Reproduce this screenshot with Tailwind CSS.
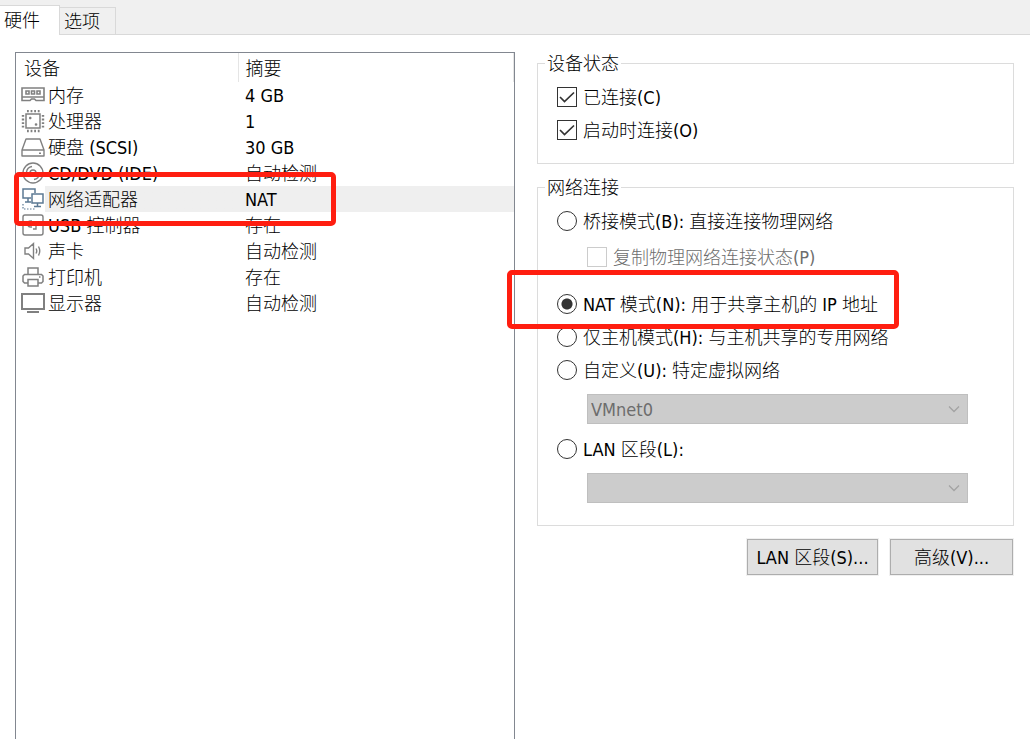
<!DOCTYPE html>
<html lang="zh-CN">
<head>
<meta charset="utf-8">
<meta name="viewport" content="width=device-width, initial-scale=1">
<title>虚拟机设置</title>
<script src="https://cdn.jsdelivr.net/npm/@tailwindcss/browser@4"></script>
</head>
<body class="flex min-h-screen flex-col overflow-x-hidden bg-white font-['DejaVu_Sans_Condensed','Noto_Sans_CJK_SC_Light','Noto_Sans_CJK_SC',sans-serif] text-[18px] leading-6 text-black">
<nav class="flex h-[35px] shrink-0 items-end bg-[#f0f0f0] shadow-[inset_0_-1px_0_#d9d9d9]" role="tablist">
  <button role="tab" aria-selected="true" class="h-[30px] border-t border-r border-[#d9d9d9] bg-white pr-[19px] pl-1 leading-7">硬件</button>
  <button role="tab" aria-selected="false" class="h-7 border border-l-0 border-[#d9d9d9] bg-[#f0f0f0] pt-0.5 pr-[15px] pl-1 leading-6">选项</button>
</nav>
<main class="grid flex-1 grid-cols-[500fr_477fr] gap-x-[22px] pt-[17px] pr-4 pl-[15px]">
  <section class="relative border border-b-0 border-[#828790]">
    <table class="w-full table-fixed border-collapse text-left">
      <colgroup><col class="w-[222px]"><col></colgroup>
      <thead>
        <tr class="h-[29px]">
          <th class="border-r border-[#e5e5e5] p-0 pt-0.5 pl-2 font-normal">设备</th>
          <th class="border-r border-[#e5e5e5] p-0 pt-0.5 pl-[7px] font-normal">摘要</th>
        </tr>
      </thead>
      <tbody>
        <tr class="h-[26px]">
          <td class="p-0 pt-0.5 pl-[5px]"><div class="flex items-center gap-[3px] whitespace-nowrap">
            <svg class="size-6 shrink-0" viewBox="0 0 24 24" fill="none" stroke="#808080" stroke-width="1.600"><path d="M1 4h22v12.500h-8l-1.500-1.500h-3L9 16.500H1zM1 13h22"/><path d="M5 7h3v3H5zM10.500 7h3v3h-3zM16 7h3v3h-3z"/></svg>内存</div></td>
          <td class="p-0 pt-0.5 pl-[7px]">4 GB</td>
        </tr>
        <tr class="h-[26px]">
          <td class="p-0 pt-0.5 pl-[5px]"><div class="flex items-center gap-[3px] whitespace-nowrap">
            <svg class="size-6 shrink-0" viewBox="0 1 24 24" fill="none" stroke="#808080" stroke-width="1.500"><path d="M5 5h14v14H5z"/><path d="M6 2h13M6 22h13M2 6v13M22 6v13" stroke-width="2.400" stroke-dasharray="1.800 1.800"/><path d="M8 9h2.500M9.200 7.800v2.500M13.800 15.500h2.500M15 14.200v2.500" stroke-width="1.500"/></svg>处理器</div></td>
          <td class="p-0 pt-0.5 pl-[7px]">1</td>
        </tr>
        <tr class="h-[26px]">
          <td class="p-0 pt-0.5 pl-[5px]"><div class="flex items-center gap-[3px] whitespace-nowrap">
            <svg class="size-6 shrink-0" viewBox="0 1 24 24" fill="none" stroke="#808080" stroke-width="1.400" stroke-linejoin="round"><path d="M1 15 5 4h14l4 11v6H1zM1 15h22M18 18.300h2"/></svg>硬盘 (SCSI)</div></td>
          <td class="p-0 pt-0.5 pl-[7px]">30 GB</td>
        </tr>
        <tr class="h-[26px]">
          <td class="p-0 pt-0.5 pl-[5px]"><div class="flex items-center gap-[3px] whitespace-nowrap">
            <svg class="size-6 shrink-0" viewBox="0 1 24 24" fill="none" stroke="#808080" stroke-width="1.400"><circle cx="12" cy="12" r="10"/><circle cx="12" cy="12" r="3"/><path d="M5.500 11a6.500 6.500 0 0 1 5.500-5.500M18.500 13a6.500 6.500 0 0 1-5.500 5.500"/></svg>CD/DVD (IDE)</div></td>
          <td class="p-0 pt-0.5 pl-[7px]">自动检测</td>
        </tr>
        <tr class="h-[26px]">
          <td class="bg-linear-to-r from-white from-[29px] to-[#efefef] to-[29px] p-0 pt-0.5 pl-[5px]"><div class="flex items-center gap-[3px] whitespace-nowrap">
            <svg class="size-6 shrink-0" viewBox="0 1 24 24" fill="none" stroke="#5c7a94" stroke-width="1.500"><path d="M10 11H2V2h12v4M7 11v4M4 15h6"/><path d="M11 7h11v9H11zM16.500 16v3M13 19.500h7"/><path d="M2 17v5h13" stroke-width="1.200" stroke-dasharray="1.500 1.500"/></svg>网络适配器</div></td>
          <td class="bg-[#efefef] p-0 pt-0.5 pl-[7px]">NAT</td>
        </tr>
        <tr class="h-[26px]">
          <td class="p-0 pt-0.5 pl-[5px]"><div class="flex items-center gap-[3px] whitespace-nowrap">
            <svg class="size-6 shrink-0" viewBox="0 1 24 24" fill="none" stroke="#808080" stroke-width="1.400"><rect x="2" y="2" width="20" height="20" rx="2"/><path d="M11 8H9.500a2.500 2.500 0 0 0-2.500 2.500v1a2.500 2.500 0 0 0 2.500 2.500H11M13 11h2v5h-3"/></svg>USB 控制器</div></td>
          <td class="p-0 pt-0.5 pl-[7px]">存在</td>
        </tr>
        <tr class="h-[26px]">
          <td class="p-0 pt-0.5 pl-[5px]"><div class="flex items-center gap-[3px] whitespace-nowrap">
            <svg class="size-6 shrink-0" viewBox="0 1 24 24" fill="none" stroke="#808080" stroke-width="1.400"><path d="M4 9h3.500l5-4.500v15l-5-4.500H4zM15 9.500q1.500 2.500 0 5M17.500 7.500q2.500 4.500 0 9"/></svg>声卡</div></td>
          <td class="p-0 pt-0.5 pl-[7px]">自动检测</td>
        </tr>
        <tr class="h-[26px]">
          <td class="p-0 pt-0.5 pl-[5px]"><div class="flex items-center gap-[3px] whitespace-nowrap">
            <svg class="size-6 shrink-0" viewBox="0 1 24 24" fill="none" stroke="#808080" stroke-width="1.500"><path d="M7 9.500V3h10v6.500M7 18H3.500L2 16.500V11l1.500-1.500h17L22 11v5.500L20.500 18H17M7 14.500h10V21H7zM18 12h1.500"/></svg>打印机</div></td>
          <td class="p-0 pt-0.5 pl-[7px]">存在</td>
        </tr>
        <tr class="h-[26px]">
          <td class="p-0 pt-0.5 pl-[5px]"><div class="flex items-center gap-[3px] whitespace-nowrap">
            <svg class="size-6 shrink-0" viewBox="0 1 24 24" fill="none" stroke="#808080" stroke-width="2"><path d="M1 3h22v15H1zM6 21h12"/></svg>显示器</div></td>
          <td class="p-0 pt-0.5 pl-[7px]">自动检测</td>
        </tr>
      </tbody>
    </table>
    <div class="pointer-events-none absolute top-[119px] -left-0.5 h-[54px] w-[322px] rounded-[5px] border-5 border-[#ff1e10]"></div>
  </section>

  <section class="flex flex-col whitespace-nowrap">
    <fieldset class="border border-[#dcdcdc] pr-4 pb-5 pl-[19px]">
      <legend class="-ml-3 px-0.5 pt-0.5 leading-5">设备状态</legend>
      <div class="flex flex-col gap-[7px] pt-2.5">
        <label class="flex items-center gap-1.5"><span class="grid"><input type="checkbox" checked class="peer col-start-1 row-start-1 size-5 appearance-none border border-[#333] bg-white"><svg class="pointer-events-none invisible col-start-1 row-start-1 size-5 peer-checked:visible" viewBox="0 0 20 20" fill="none" stroke="#333" stroke-width="1.700"><path d="m3 10 4.500 4.500L17 5.500"/></svg></span><span class="pt-0.5">已连接(C)</span></label>
        <label class="flex items-center gap-1.5"><span class="grid"><input type="checkbox" checked class="peer col-start-1 row-start-1 size-5 appearance-none border border-[#333] bg-white"><svg class="pointer-events-none invisible col-start-1 row-start-1 size-5 peer-checked:visible" viewBox="0 0 20 20" fill="none" stroke="#333" stroke-width="1.700"><path d="m3 10 4.500 4.500L17 5.500"/></svg></span><span class="pt-0.5">启动时连接(O)</span></label>
      </div>
    </fieldset>

    <fieldset class="mt-3 border border-[#dcdcdc] pr-[45px] pb-[22px] pl-[19px]">
      <legend class="-ml-3 px-0.5 pt-0.5 leading-5">网络连接</legend>
      <div class="flex flex-col pt-2.5">
        <label class="flex items-center gap-1.5"><input type="radio" name="net" class="size-5 appearance-none rounded-full border border-[#333] bg-white checked:border-[#333] checked:bg-radial checked:from-[#333] checked:from-[5px] checked:to-white checked:to-[6px]"><span class="pt-0.5">桥接模式(B): 直接连接物理网络</span></label>
        <label class="mt-2.5 ml-[30px] flex items-center gap-1.5 text-[#6d6d6d]"><input type="checkbox" disabled class="size-5 appearance-none border border-[#ccc] bg-white"><span class="pt-0.5">复制物理网络连接状态(P)</span></label>
        <div class="relative mt-[21px]">
          <label class="flex items-center gap-1.5"><input type="radio" name="net" checked class="size-5 appearance-none rounded-full border border-[#333] bg-white checked:border-[#333] checked:bg-radial checked:from-[#333] checked:from-[5px] checked:to-white checked:to-[6px]"><span class="pt-0.5">NAT 模式(N): 用于共享主机的 IP 地址</span></label>
          <div class="pointer-events-none absolute -top-[21px] -left-[50px] z-10 h-[59px] w-[392px] rounded-[5px] border-5 border-[#ff1e10]"></div>
        </div>
        <label class="mt-[7px] flex items-center gap-1.5"><input type="radio" name="net" class="size-5 appearance-none rounded-full border border-[#333] bg-white checked:border-[#333] checked:bg-radial checked:from-[#333] checked:from-[5px] checked:to-white checked:to-[6px]"><span class="pt-0.5">仅主机模式(H): 与主机共享的专用网络</span></label>
        <label class="mt-[7px] flex items-center gap-1.5"><input type="radio" name="net" class="size-5 appearance-none rounded-full border border-[#333] bg-white checked:border-[#333] checked:bg-radial checked:from-[#333] checked:from-[5px] checked:to-white checked:to-[6px]"><span class="pt-0.5">自定义(U): 特定虚拟网络</span></label>
        <div class="mt-[11px] ml-[30px] grid items-center">
          <select disabled aria-label="特定虚拟网络" class="col-start-1 row-start-1 h-[30px] w-full appearance-none border border-[#bfbfbf] bg-[#ccc] pt-0.5 pl-[3px] leading-6 text-[#6d6d6d] opacity-100"><option>VMnet0</option></select>
          <svg class="pointer-events-none col-start-1 row-start-1 mr-2 h-2 w-3 justify-self-end" viewBox="0 0 12 8" fill="none" stroke="#a3a3a3" stroke-width="1.300"><path d="m1 1.500 5 5 5-5"/></svg>
        </div>
        <label class="mt-3 flex items-center gap-1.5"><input type="radio" name="net" class="size-5 appearance-none rounded-full border border-[#333] bg-white checked:border-[#333] checked:bg-radial checked:from-[#333] checked:from-[5px] checked:to-white checked:to-[6px]"><span class="pt-0.5">LAN 区段(L):</span></label>
        <div class="mt-[11px] ml-[30px] grid items-center">
          <select disabled aria-label="LAN 区段" class="col-start-1 row-start-1 h-[30px] w-full appearance-none border border-[#bfbfbf] bg-[#ccc] pt-0.5 pl-[3px] leading-6 text-[#6d6d6d] opacity-100"><option></option></select>
          <svg class="pointer-events-none col-start-1 row-start-1 mr-2 h-2 w-3 justify-self-end" viewBox="0 0 12 8" fill="none" stroke="#a3a3a3" stroke-width="1.300"><path d="m1 1.500 5 5 5-5"/></svg>
        </div>
      </div>
    </fieldset>

    <div class="mt-[13px] flex justify-end gap-3 pr-px">
      <button class="h-9 w-[131px] border border-[#adadad] bg-[#e1e1e1] pt-0.5 ring-1 ring-[#f0f0f0]">LAN 区段(S)...</button>
      <button class="h-9 w-[123px] border border-[#adadad] bg-[#e1e1e1] pt-0.5 ring-1 ring-[#f0f0f0]">高级(V)...</button>
    </div>
  </section>
</main>
</body>
</html>
